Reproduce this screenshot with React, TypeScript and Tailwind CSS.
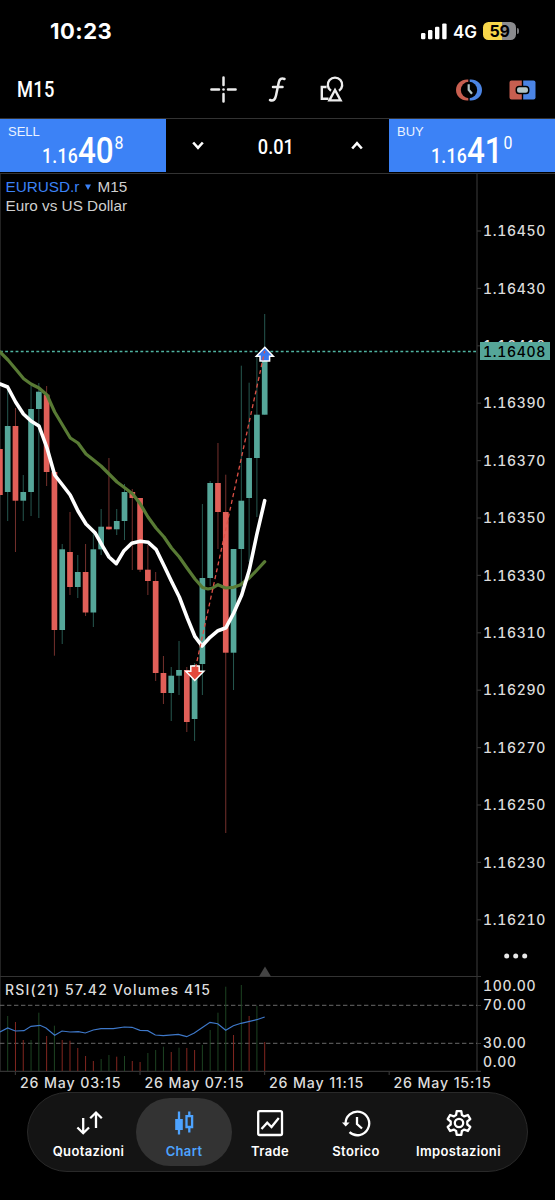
import React from "react";

type Candle = [up: number, top: number, bottom: number, high: number, low: number];

const STEP = 7.788;
const cx = (n: number) => -0.1 + n * STEP;

const candles: Candle[] = [
  [0, 449, 495, 449, 495],
  [1, 426, 492, 386, 521],
  [0, 426, 500.7, 408, 552],
  [1, 492, 500.7, 475, 521],
  [1, 409, 492, 386, 516],
  [1, 391.7, 409, 383, 518],
  [0, 394.7, 472, 386, 486],
  [0, 472, 630, 472, 655.7],
  [1, 549.3, 630, 544, 644],
  [0, 552, 587, 512, 595],
  [1, 572, 587, 555, 598],
  [0, 572, 612.5, 544, 616],
  [1, 549.3, 612.5, 531, 627],
  [1, 526.7, 549.3, 509, 555],
  [0, 526.7, 529.3, 458, 530],
  [1, 521, 529.3, 509, 535],
  [1, 492, 521, 484, 540],
  [0, 492, 498, 489, 570],
  [0, 498, 569.7, 498, 572],
  [0, 569.7, 581, 545, 595],
  [0, 581, 673, 572, 681],
  [0, 673, 693, 656, 704],
  [1, 675.7, 693, 667, 721],
  [1, 670, 675.7, 641, 695],
  [0, 670, 722, 667, 732],
  [1, 665, 719, 663, 741],
  [1, 578, 664, 504, 695],
  [1, 483, 578, 481, 586],
  [0, 483, 512, 443, 549],
  [0, 512, 652.7, 474.7, 833],
  [1, 549, 652.7, 549, 690],
  [1, 500.7, 549, 365.7, 590],
  [1, 458, 498, 382.7, 562],
  [1, 414.7, 458, 357, 517],
  [1, 351, 414.7, 314, 414.7],
];

const volumes: [up: number, top: number][] = [
  [1, 1016], [0, 1022], [0, 1040], [1, 1040], [1, 1012.7], [0, 1036], [1, 1025.7],
  [0, 1040], [0, 1040.7], [0, 1048], [0, 1056], [0, 1061], [1, 1059], [1, 1055],
  [0, 1056.7], [1, 1056], [0, 1061], [0, 1062], [1, 1053], [1, 1050], [1, 1046.7],
  [0, 1052], [1, 1047.7], [0, 1048], [0, 1050], [1, 1045], [1, 1030], [1, 1012.7],
  [1, 986.7], [0, 1035], [1, 985], [0, 1016], [1, 1006], [0, 1042],
];

const slowAverage =
  "0,352 8,360 15.6,369 23.7,378.7 31,384 39,388 47,395 54.7,412 62.5,425 70.3,438 78,443 86,454 93.6,460 101,466 109,474 117,482 125,488 132.7,494 140.3,504 148,517 156,528 164,537 171.5,548 179.3,557 187,568 195,579 202.5,587.5 208,589 212.7,588 218,584.7 225.5,588 233.7,587.3 240,585 249.3,578 257,570 264.7,561.7";
const fastAverage =
  "0,384 7.6,387 15.6,402 23.4,414 31,421 39,426 47,448 54.7,475 62.5,485 70.2,495 78,511 86,524 95,532.7 103.3,547.3 109,557 116.3,563.7 124,550.7 131.7,543.3 140.3,541.3 148.3,542.3 156,549.3 163.7,565 171.7,581.7 179.3,597 187.3,618 195,636.7 202,646 210,637.3 218,630.7 226,627.7 233.7,613 241.7,595 249.3,570 256.7,535 264.7,500.7";
const rsi =
  "0,1032 7.7,1028 15.3,1031 24,1030.7 31,1026.3 40,1025.3 46,1028 54.7,1035.3 62,1031 70,1032 78.3,1031.7 85.3,1033 93.3,1030 101,1028.7 113.3,1028.7 124.3,1027 132,1027.3 140,1030.3 147.7,1030.7 155.3,1035 163.3,1035.7 178.3,1034.3 186.7,1036.7 194.3,1033 202,1027.7 210,1022.3 217.7,1023.7 225.7,1030.3 233.3,1025.7 241,1023.3 256.7,1019.7 264.7,1017";

const prices = [
  "1.16450", "1.16430", "1.16410", "1.16390", "1.16370", "1.16350", "1.16330",
  "1.16310", "1.16290", "1.16270", "1.16250", "1.16230", "1.16210",
];
const times = ["26 May 03:15", "26 May 07:15", "26 May 11:15", "26 May 15:15"];

function StatusBar() {
  return (
    <div className="flex h-[62px] items-center justify-between pl-[50px] pr-[36px]">
      <span className="text-[22px] font-bold leading-none tracking-[0.5px]">10:23</span>
      <div className="flex items-center">
        <svg width="26" height="17" viewBox="0 0 26 17" fill="#fff">
          <rect x="0" y="10" width="4.4" height="6.2" rx="1.2" />
          <rect x="7" y="7" width="4.4" height="9.2" rx="1.2" />
          <rect x="14" y="3.8" width="4.4" height="12.4" rx="1.2" />
          <rect x="21.2" y="0.4" width="4.4" height="15.8" rx="1.2" />
        </svg>
        <span className="ml-[6px] mt-[2px] text-[17px] font-semibold leading-none">4G</span>
        <div className="ml-[6px] flex h-[18px] w-[33px] items-center justify-center rounded-[5.5px] bg-[linear-gradient(90deg,#f8d74a_58%,#8b8b8e_58%)] text-[16px] font-bold leading-none tracking-[-0.3px] text-black">
          59
        </div>
        <div className="ml-px h-[6px] w-[2px] rounded-r-full bg-[#77777a]" />
      </div>
    </div>
  );
}

function Toolbar() {
  return (
    <div className="flex h-[56px] items-center pb-px">
      <span className="w-[193px] pl-[17px] pt-[2px]">
        <span className="inline-block origin-left scale-x-[0.85] font-[Roboto] text-[21.5px] font-medium leading-none tracking-[0.3px]">M15</span>
      </span>
      <svg className="ml-[16px]" width="29" height="29" viewBox="0 0 29 29" stroke="#ececec" strokeWidth="2.5" strokeLinecap="round">
        <path d="M2.4 14.500H10M19 14.500h7.6M14.5 2.500v7.4M14.5 19.100V26.500" />
        <path d="M14.5 14.500h.01" strokeWidth="2.6" />
      </svg>
      <svg className="ml-[30px]" width="20" height="29" viewBox="0 0 20 29" fill="none" stroke="#ececec" strokeWidth="2.5" strokeLinecap="round">
        <path d="M16.500 4C13.500 2.600 11.500 4 10.800 7.200L8 20.500C7.300 24.100 5.400 26.600 2 25M5 12H14.500" />
      </svg>
      <svg className="ml-[30px]" width="28" height="29" viewBox="0 0 28 29" fill="none" stroke="#ececec" strokeWidth="2.4">
        <path d="M8.600 12H3.800V23.800H10.500" />
        <path d="M13 15.800A7.200 7.200 0 1 1 21 15.800" />
        <path d="M17 15 L11.400 25.400 H22.600 Z" strokeLinejoin="miter" />
      </svg>
      <svg className="ml-auto" width="26" height="22" viewBox="0 0 26 22">
        <path d="M12.3 .5H11C5 .5 0 5 0 11s5 10.500 11 10.500h1.300Z" fill="#c85f50" />
        <path d="M13.700 .5H15C21 .5 26 5 26 11s-5 10.500-11 10.500h-1.300Z" fill="#4b84e4" />
        <circle cx="13" cy="11" r="8.200" fill="#000" />
        <path d="M12.700 5.200V10.800L16 14.800" fill="none" stroke="#b2c4c6" strokeWidth="2.200" />
      </svg>
      <svg className="ml-[27px] mr-[19px]" width="27" height="20" viewBox="0 0 27 20">
        <path d="M2.500.5H12.800V19.500H2.500A2 2 0 0 1 .5 17.500V2.500A2 2 0 0 1 2.500.5Z" fill="#c85f50" />
        <path d="M14.200.5H24.500A2 2 0 0 1 26.500 2.500V17.500A2 2 0 0 1 24.500 19.500H14.200Z" fill="#4b84e4" />
        <rect x="7.300" y="6.400" width="12.400" height="7.200" rx="2.800" fill="#b2c4c6" stroke="#000" strokeWidth="1.500" />
      </svg>
    </div>
  );
}

function Quote({ side, main, sup }: { side: string; main: string; sup: string }) {
  return (
    <div className="flex h-[53px] w-[166px] flex-col bg-[#3c82f6] pt-[5px]">
      <span className="pl-[8px] font-['Liberation_Sans'] text-[13px] leading-[15px] text-[#eaf2ff]">{side}</span>
      <div className="-mt-[6px] ml-[42px] flex origin-left scale-x-[0.86] items-baseline font-[Roboto] font-medium leading-none">
        <span className="text-[20.500px] tracking-[0.3px]">1.16</span>
        <span className="text-[36.500px] leading-[36px]">{main}</span>
        <span className="relative -top-[14px] ml-px text-[18.500px] font-normal">{sup}</span>
      </div>
    </div>
  );
}

function TradePanel() {
  return (
    <div className="flex h-[56px] border-y border-[#333] pb-px">
      <Quote side="SELL" main="40" sup="8" />
      <div className="flex flex-1 items-center justify-between px-[25px]">
        <svg width="14" height="12" viewBox="0 0 14 12" fill="none" stroke="#fff" strokeWidth="2.600">
          <path d="M2.200 2.500 7 7.800 11.800 2.500" />
        </svg>
        <span className="-ml-[3px] mt-[2px] scale-x-[0.91] font-[Roboto] text-[20px] font-medium leading-none">0.01</span>
        <svg width="14" height="12" viewBox="0 0 14 12" fill="none" stroke="#fff" strokeWidth="2.600">
          <path d="M2.200 8.500 7 3.200 11.800 8.500" />
        </svg>
      </div>
      <Quote side="BUY" main="41" sup="0" />
    </div>
  );
}

function ChartCanvas() {
  return (
    <svg className="block overflow-visible" width="477" height="902" viewBox="0 174 477 902" fill="none">
      <g stroke="#333" strokeWidth="1.200">
        <path d="M.5 174V1071" stroke="#222" strokeWidth="1" />
        <path d="M477 174V1071M0 976.500H481M0 1071.300H481" />
        {prices.map((p, i) => (
          <path key={p} d={`M477 ${231 + i * 57.4}h4`} />
        ))}
        <path d="M477 1005.500h4M477 1043.500h4" />
        {times.map((t, i) => (
          <path key={t} d={`M${15.400 + i * 124.600} 1071v4`} />
        ))}
      </g>
      <path d="M259 976.500 265 966.500 271 976.500Z" fill="#444" />
      <path d="M0 1005.300H477M0 1043.300H477" stroke="#686868" strokeWidth="1" strokeDasharray="4.400 2.600" />
      {volumes.map(([up, top], i) => (
        <path key={i} d={`M${cx(i + 1)} ${top}V1071`} stroke={up ? "#1d4322" : "#82261f"} strokeWidth="1" />
      ))}
      <polyline points={rsi} stroke="#3e78c9" strokeWidth="1.200" />
      <path d="M0 351.500H477" stroke="#4fb3a1" strokeWidth="1.300" strokeDasharray="2.800 2.400" />
      {candles.map(([up, top, bottom, high, low], i) => (
        <g key={i}>
          <path d={`M${cx(i)} ${high}V${low}`} stroke={up ? "#26574f" : "#74302c"} strokeWidth="1" />
          <rect x={cx(i) - 2.850} y={top} width="5.700" height={bottom - top} fill={up ? "#55a699" : "#e15f58"} />
        </g>
      ))}
      <polyline points={slowAverage} stroke="#587a34" strokeWidth="3.200" strokeLinejoin="round" strokeLinecap="round" />
      <polyline points={fastAverage} stroke="#fff" strokeWidth="3.600" strokeLinejoin="round" strokeLinecap="round" />
      <path d="M194.800 680.500 185.800 671.200H190.800V666H199.200V671.200H203.800Z" fill="#e3493c" stroke="#fff" strokeWidth="1.500" />
      <path d="M264.800 347.300 273.300 356.200H269.600V361H260V356.200H256.300Z" fill="#3a78ee" stroke="#fff" strokeWidth="1.500" />
      <path d="M195.500 668 264.700 351" stroke="#dd5046" strokeWidth="1.300" strokeDasharray="4 3" />
    </svg>
  );
}

function Chart() {
  return (
    <div className="relative grid h-[918px] grid-cols-[477px_1fr] grid-rows-[902px_1fr] text-[14px] font-medium leading-none tracking-[1px] text-[#dcdcdc]">
      <ChartCanvas />
      <div className="flex flex-col pl-[6px] pt-[28.300px] tabular-nums tracking-[0.700px]">
        {prices.map((p) => (
          <span key={p} className="flex h-[57.400px] shrink-0 items-start pt-[22px]">
            {p}
          </span>
        ))}
        <svg className="ml-[20px] mt-[4px] shrink-0" width="26" height="8" viewBox="0 0 26 8" fill="#e8e8e8">
          <circle cx="3.700" cy="4" r="2.500" />
          <circle cx="12.700" cy="4" r="2.500" />
          <circle cx="21.700" cy="4" r="2.500" />
        </svg>
        <span className="mt-[19px]">100.00</span>
        <span className="mt-[5px]">70.00</span>
        <span className="mt-[24px]">30.00</span>
        <span className="mt-[5px]">0.00</span>
      </div>
      <div className="col-span-2 flex pl-[20px]">
        {times.map((t) => (
          <span key={t} className="w-[124.500px] shrink-0 whitespace-nowrap text-[14.200px] tracking-[0.850px]">{t}</span>
        ))}
      </div>
      <div className="absolute left-[5.500px] top-[3px] font-['Liberation_Sans'] text-[15.300px] font-normal leading-[19px] tracking-normal text-[#cfcfcf]">
        <div className="flex items-center">
          <span className="text-[#3c82f6]">EURUSD.r</span>
          <svg className="mx-[6px]" width="6" height="6" viewBox="0 0 6 6"><path d="M0 .5H6L3 6Z" fill="#3c82f6" /></svg>
          <span>M15</span>
        </div>
        <div>Euro vs US Dollar</div>
      </div>
      <span className="absolute left-[5px] top-[809px] tracking-[1.200px]">RSI(21) 57.42 Volumes 415</span>
      <span className="absolute left-[480px] top-[168px] flex h-[18px] w-[70px] items-center bg-[#55a699] pl-[3px] pt-px tabular-nums tracking-[0.700px] text-black">1.16408</span>
    </div>
  );
}

const iconProps = { width: 30, height: 30, viewBox: "0 0 30 30", fill: "none", stroke: "currentColor", strokeWidth: 2.3 };

function NavBar() {
  const items: { label: string; box: string; icon: React.ReactNode }[] = [
    {
      label: "Quotazioni",
      box: "w-[95px]",
      icon: <path d="M9.200 10V25M3.400 19.500 9.200 25.200 15 19.500M22 20V4.700M16.200 10.200 22 4.500 27.800 10.200" />,
    },
    {
      label: "Chart",
      box: "w-[96px] rounded-[35px] bg-[#333] text-[#4da3ff]",
      icon: (
        <>
          <path d="M10 3.500V26.500" />
          <rect x="6.200" y="11" width="7.600" height="11" fill="currentColor" stroke="none" />
          <path d="M20.300 3.500V8M20.300 19.500V24.500M17.500 8.200H23.100V19H17.500Z" />
        </>
      ),
    },
    {
      label: "Trade",
      box: "w-[76px]",
      icon: (
        <>
          <rect x="3.200" y="3.200" width="23.800" height="23.800" rx="1.500" />
          <path d="M6.500 21 12.200 14.700 16.500 19 23.800 10" />
        </>
      ),
    },
    {
      label: "Storico",
      box: "w-[96px]",
      icon: (
        <>
          <path d="M4.600 16A11.800 11.800 0 1 1 8.500 24.200" />
          <path d="M1 14.500H8.600L4.700 18.500Z" fill="currentColor" stroke="none" />
          <path d="M16 9V16L21 20.500" />
        </>
      ),
    },
    {
      label: "Impostazioni",
      box: "w-[109px]",
      icon: (
        <>
          <path
            strokeLinejoin="round"
            d="M12.700 3.200H17.300L17.900 7 20.300 8.400 23.900 7 26.300 11.100 23.300 13.500V16.500L26.300 18.900 23.900 23 20.300 21.600 17.900 23 17.300 26.800H12.700L12.100 23 9.700 21.600 6.100 23 3.700 18.900 6.700 16.500V13.500L3.700 11.100 6.100 7 9.700 8.400 12.100 7Z"
          />
          <circle cx="15" cy="15" r="4.200" />
        </>
      ),
    },
  ];
  return (
    <nav className="mx-[27px] flex h-[80px] rounded-[40px] border border-[#292929] bg-[#141414] px-[13px] py-[5px]">
      {items.map(({ label, box, icon }) => (
        <div key={label} className={`flex shrink-0 flex-col items-center pt-[10px] ${box}`}>
          <svg {...iconProps}>{icon}</svg>
          <span className="mt-[4.500px] text-[13px] font-semibold leading-[16px] tracking-[0.350px]">{label}</span>
        </div>
      ))}
    </nav>
  );
}

export default function App() {
  return (
    <div className="h-[1200px] w-[555px] overflow-hidden bg-black font-[Inter,sans-serif] text-white">
      <StatusBar />
      <Toolbar />
      <TradePanel />
      <Chart />
      <NavBar />
    </div>
  );
}
